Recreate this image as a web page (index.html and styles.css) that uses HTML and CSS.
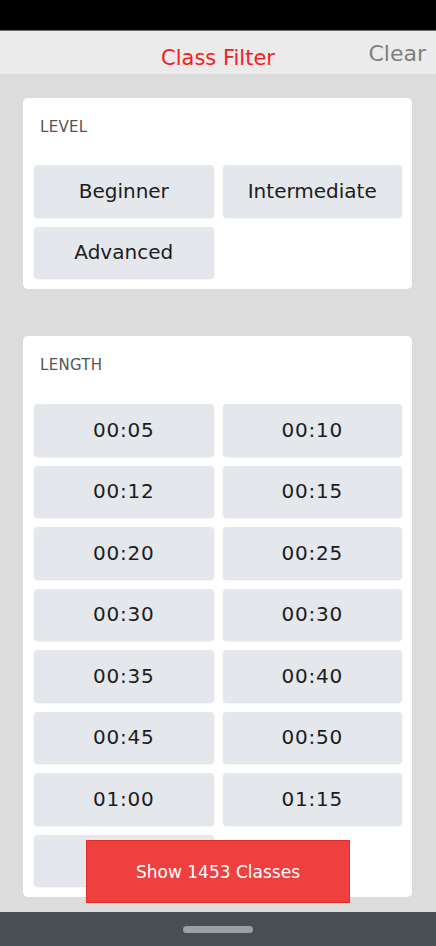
FILE: index.html
```html
<!DOCTYPE html>
<html>
<head>
<meta charset="utf-8">
<link rel="stylesheet" href="styles.css">
</head>
<body>
<div class="app">
  <div class="statusbar"></div>
  <header class="header">
    <div class="title">Class Filter</div>
    <div class="clear">Clear</div>
  </header>
  <main class="scroll">
    <section class="card">
      <div class="label">LEVEL</div>
      <div class="grid">
        <div class="btn">Beginner</div>
        <div class="btn">Intermediate</div>
        <div class="btn">Advanced</div>
      </div>
    </section>
    <section class="card card-length">
      <div class="label">LENGTH</div>
      <div class="grid times">
        <div class="btn">00:05</div>
        <div class="btn">00:10</div>
        <div class="btn">00:12</div>
        <div class="btn">00:15</div>
        <div class="btn">00:20</div>
        <div class="btn">00:25</div>
        <div class="btn">00:30</div>
        <div class="btn">00:30</div>
        <div class="btn">00:35</div>
        <div class="btn">00:40</div>
        <div class="btn">00:45</div>
        <div class="btn">00:50</div>
        <div class="btn">01:00</div>
        <div class="btn">01:15</div>
        <div class="btn"></div>
      </div>
    </section>
  </main>
  <div class="show-btn">Show 1453 Classes</div>
  <nav class="navbar"><span class="handle"></span></nav>
</div>
</body>
</html>
```

FILE: styles.css
```css
html, body {
  margin: 0;
  padding: 0;
}
body {
  font-family: "DejaVu Sans", "Liberation Sans", sans-serif;
  background: #dcdcdc;
}
.app {
  position: relative;
  width: 436px;
  height: 946px;
  display: flex;
  flex-direction: column;
  overflow: hidden;
}
.statusbar {
  height: 30px;
  background: #000;
  flex: none;
}
.header {
  flex: none;
  height: 43px;
  border-top: 1px solid #6f6f6f;
  background: #ebebeb;
  position: relative;
  display: flex;
  align-items: center;
  justify-content: center;
}
.title {
  color: #f41c1c;
  font-size: 21px;
  padding-top: 11px;
}
.clear {
  position: absolute;
  right: 10px;
  top: 10px;
  color: #7f7f7f;
  font-size: 22px;
}
.scroll {
  flex: 1;
  overflow: hidden;
  padding: 24px 24px 0 23px;
}
.card {
  background: #fff;
  border-radius: 5px;
  padding: 20px 10px 11px 11px;
}
.card-length {
  margin-top: 47px;
}
.label {
  font-size: 15px;
  line-height: 18px;
  color: #555;
  letter-spacing: 0.3px;
  margin-left: 6px;
  margin-bottom: 29px;
}
.card-length .label {
  margin-bottom: 30px;
}
.grid {
  display: grid;
  grid-template-columns: 1fr 1fr;
  column-gap: 9px;
  row-gap: 10px;
}
.btn {
  height: 51.5px;
  background: #e4e7eb;
  border-radius: 4px;
  box-shadow: 0 1px 2px rgba(0, 0, 0, 0.14);
  display: flex;
  align-items: center;
  justify-content: center;
  font-size: 20px;
  color: #1c1c1c;
}
.times .btn {
  letter-spacing: 0.8px;
}
.show-btn {
  position: absolute;
  left: 86px;
  top: 840px;
  width: 262px;
  height: 61px;
  background: #ef4040;
  border: 1px solid #e62a24;
  color: #fff;
  font-size: 17px;
  display: flex;
  align-items: center;
  justify-content: center;
}
.navbar {
  flex: none;
  height: 34px;
  background: #474e54;
  display: flex;
  align-items: center;
  justify-content: center;
}
.handle {
  width: 70px;
  height: 7px;
  border-radius: 4px;
  background: #9ba0a3;
}
```
